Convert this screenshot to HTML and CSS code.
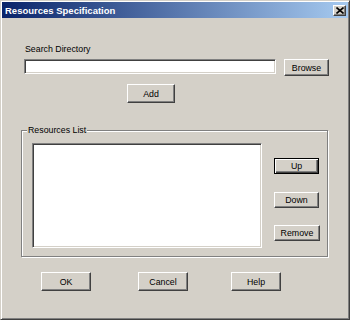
FILE: index.html
```html
<!DOCTYPE html>
<html lang="en">
<head>
    <meta charset="UTF-8">
    <title>Resources Specification</title>
    <link rel="stylesheet" href="styles.css">
</head>
<body>

    <div class="window">
        <!-- Title bar -->
        <div class="titlebar">
            <span class="title">Resources Specification</span>
            <button class="close" aria-label="Close">
                <svg width="8" height="7" viewBox="0 0 8 7">
                    <path d="M0.5 0.5 L7.5 6.5 M7.5 0.5 L0.5 6.5" stroke="#000" stroke-width="1.6" fill="none"/>
                </svg>
            </button>
        </div>

        <div class="content">
            <div class="label">Search Directory</div>
            <div class="search-row">
                <input class="textbox" type="text">
                <button class="btn btn-browse">Browse</button>
            </div>
            <button class="btn btn-add">Add</button>

            <!-- Resources list group -->
            <fieldset class="group">
                <legend>Resources List</legend>
                <div class="group-body">
                    <div class="listbox"></div>
                    <div class="side-buttons">
                        <button class="btn btn-default">Up</button>
                        <button class="btn btn-down">Down</button>
                        <button class="btn btn-remove">Remove</button>
                    </div>
                </div>
            </fieldset>

            <div class="bottom-row">
                <button class="btn btn-wide">OK</button>
                <button class="btn btn-wide btn-cancel">Cancel</button>
                <button class="btn btn-wide btn-help">Help</button>
            </div>
        </div>
    </div>

</body>
</html>
```

FILE: styles.css
```css
body {
    margin: 0;
    background-color: #d4d0c8;
    font-family: "Liberation Sans", Arial, sans-serif;
    font-size: 8.8px;
    color: #000;
}

/* Khung cửa sổ */
.window {
    width: 350px;
    height: 320px;
    box-sizing: border-box;
    padding: 1px;
    background-color: #d4d0c8;
    border: 1px solid;
    border-color: #d4d0c8 #404040 #404040 #d4d0c8;
    box-shadow: inset 1px 1px 0 #fff, inset -1px -1px 0 #808080;
}

.titlebar {
    height: 16px;
    display: flex;
    align-items: center;
    justify-content: space-between;
    padding: 0 2px 0 3px;
    background: linear-gradient(to right, #0a246a, #a6caf0);
}

.title {
    color: #fff;
    font-weight: bold;
    font-size: 9.5px;
}

.close {
    width: 13px;
    height: 11px;
    padding: 0;
    display: flex;
    align-items: center;
    justify-content: center;
    background-color: #d4d0c8;
    border: 1px solid;
    border-color: #fff #404040 #404040 #fff;
    box-shadow: inset -1px -1px 0 #808080;
}

.label {
    margin: 26px 0 0 23px;
    line-height: 11px;
}

.search-row {
    display: flex;
    align-items: flex-start;
    margin: 4px 0 0 22px;
}

/* Ô nhập kiểu lõm */
.textbox,
.listbox {
    box-sizing: border-box;
    background-color: #fff;
    border: 1px solid;
    border-color: #808080 #fff #fff #808080;
    box-shadow: inset 1px 1px 0 #404040, inset -1px -1px 0 #d4d0c8;
}

.textbox {
    width: 252px;
    height: 15px;
    margin: 0;
    padding: 0;
    outline: none;
}

/* Nút kiểu Windows cổ điển */
.btn {
    box-sizing: border-box;
    padding: 0;
    margin: 0;
    font-family: "Liberation Sans", Arial, sans-serif;
    font-size: 8.8px;
    color: #000;
    background-color: #d4d0c8;
    border: 1px solid;
    border-color: #fff #404040 #404040 #fff;
    box-shadow: inset -1px -1px 0 #808080;
    cursor: pointer;
}

.btn-default {
    border-color: #000;
    box-shadow: inset 1px 1px 0 #fff, inset -1px -1px 0 #404040, inset -2px -2px 0 #808080;
}

.btn-browse {
    width: 45px;
    height: 17px;
    margin-left: 8px;
}

.btn-add {
    display: block;
    width: 48px;
    height: 19px;
    margin: 8px 0 0 125px;
}

/* Nhóm danh sách */
.group {
    width: 307px;
    box-sizing: border-box;
    margin: 21px 0 0 19px;
    padding: 7px 0 8px 5px;
    min-inline-size: 0;
    border: 1px solid #808080;
    box-shadow: inset 1px 1px 0 #fff, 1px 1px 0 #fff;
}

.group legend {
    padding: 0 1px;
    line-height: 12px;
    background-color: #d4d0c8;
}

.group-body {
    display: flex;
    align-items: flex-start;
}

.listbox {
    width: 230px;
    height: 105px;
    margin-left: 5px;
}

.side-buttons {
    display: flex;
    flex-direction: column;
    margin: 15px 0 0 12px;
}

.side-buttons .btn {
    width: 45px;
    height: 16px;
}

.side-buttons .btn-down {
    margin-top: 18px;
}

.side-buttons .btn-remove {
    width: 46px;
    margin-top: 17px;
}

.bottom-row {
    display: flex;
    margin: 15px 0 0 39px;
}

.btn-wide {
    width: 50px;
    height: 19px;
}

.btn-cancel {
    margin-left: 47px;
}

.btn-help {
    margin-left: 43px;
}
```
